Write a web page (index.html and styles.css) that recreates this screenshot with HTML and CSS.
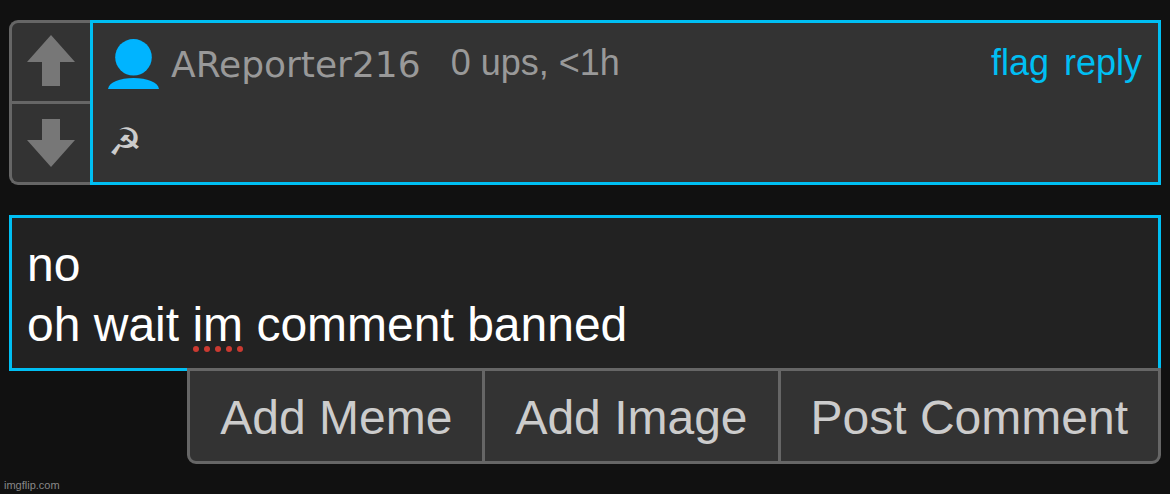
FILE: index.html
```html
<!DOCTYPE html>
<html lang="en">
<head>
    <meta charset="UTF-8">
    <meta name="viewport" content="width=device-width, initial-scale=1.0">
    <title>Comments</title>
    <link rel="stylesheet" href="styles.css">
</head>
<body>
    <main>
        <article class="comment">
            <div class="votes">
                <button type="button" class="vote" aria-label="Upvote">
                    <svg width="48" height="54" viewBox="0 0 48 54"><path d="M24 0L48 27H33V51H15V27H0Z"/></svg>
                </button>
                <button type="button" class="vote" aria-label="Downvote">
                    <svg width="48" height="48" viewBox="0 0 48 48"><path d="M15 0H33V21H48L24 48L0 21H15Z"/></svg>
                </button>
            </div>
            <div class="comment-body">
                <header class="comment-head">
                    <svg class="avatar" width="51" height="50" viewBox="0 0 51 50">
                        <circle cx="25.5" cy="18.3" r="18.3"/>
                        <path d="M0 50C1 43 12 39 25.5 39S50 43 51 50Z"/>
                    </svg>
                    <span class="username">AReporter216</span>
                    <span class="meta">0 ups, &lt;1h</span>
                    <nav class="links">
                        <a href="#flag">flag</a>
                        <a href="#reply">reply</a>
                    </nav>
                </header>
                <p class="comment-text">☭</p>
            </div>
        </article>

        <form class="reply-form">
            <div class="reply-box">
                <textarea class="reply-input" rows="2" aria-label="Comment" spellcheck="false">no
oh wait im comment banned</textarea>
                <svg class="misspelled" width="50" height="6" viewBox="0 0 50 6">
                    <circle cx="3" cy="3" r="3"/>
                    <circle cx="14" cy="3" r="3"/>
                    <circle cx="25" cy="3" r="3"/>
                    <circle cx="36" cy="3" r="3"/>
                    <circle cx="47" cy="3" r="3"/>
                </svg>
            </div>
            <div class="actions">
                <button type="button">Add Meme</button>
                <button type="button">Add Image</button>
                <button type="submit">Post Comment</button>
            </div>
        </form>
    </main>
    <footer>imgflip.com</footer>
</body>
</html>
```
FILE: styles.css
```css
* {
    box-sizing: border-box;
}
body {
    margin: 0;
    min-height: 100vh;
    display: flex;
    flex-direction: column;
    background-color: #111;
    font-family: "Liberation Sans", Arial, sans-serif;
}
main {
    padding: 20px 9px 0;
}
svg {
    display: block;
}
button {
    font-family: inherit;
    cursor: pointer;
}

/* Comment */
.comment {
    display: flex;
    margin-bottom: 30px;
}
.votes {
    display: flex;
    flex-direction: column;
    width: 81px;
    border: 3px solid #666;
    border-right: none;
    border-radius: 9px 0 0 9px;
    background-color: #333;
}
.vote {
    flex: 1;
    display: flex;
    justify-content: center;
    align-items: center;
    padding: 0;
    border: none;
    background: none;
}
.vote + .vote {
    border-top: 3px solid #666;
}
.vote path {
    fill: #777;
}
.comment-body {
    flex: 1;
    min-height: 165px;
    padding: 15px 16px 15px 15px;
    border: 3px solid #00bff3;
    background-color: #333;
    font-size: 36px;
}
.comment-head {
    display: flex;
    align-items: center;
    height: 52px;
    color: #999;
}
.avatar {
    margin-right: 12px;
    fill: #00b4ff;
}
.username {
    margin-right: 30px;
    font-family: Verdana, "DejaVu Sans", sans-serif;
}
.meta,
.links {
    line-height: 48px;
    padding-bottom: 2px;
}
.links {
    display: flex;
    gap: 15px;
    margin-left: auto;
}
.links a {
    color: #00bff3;
    text-decoration: none;
}
.comment-text {
    margin: 28px 0 0;
    color: #ccc;
    font-size: 38px;
    line-height: 48px;
}

/* Reply form */
.reply-box {
    position: relative;
}
.reply-input {
    display: block;
    width: 100%;
    height: 156px;
    padding: 17px 15px;
    border: 3px solid #00bff3;
    border-radius: 0;
    outline: none;
    resize: none;
    overflow: hidden;
    background-color: #222;
    color: #fff;
    font-family: inherit;
    font-size: 48px;
    line-height: 60px;
}
.misspelled {
    position: absolute;
    left: 184px;
    top: 131px;
    fill: #cb3a31;
}
.actions {
    position: relative;
    display: flex;
    width: fit-content;
    margin: -3px 0 0 auto;
    border: 3px solid #666;
    border-radius: 0 0 9px 9px;
    background-color: #333;
}
.actions button {
    padding: 17px 30px 13px;
    border: none;
    background: none;
    color: #ccc;
    font-size: 48px;
    line-height: 60px;
}
.actions button + button {
    border-left: 3px solid #666;
}

footer {
    margin-top: auto;
    padding: 0 4px 2px;
    color: #888;
    font-size: 11px;
    line-height: 13px;
}
```
